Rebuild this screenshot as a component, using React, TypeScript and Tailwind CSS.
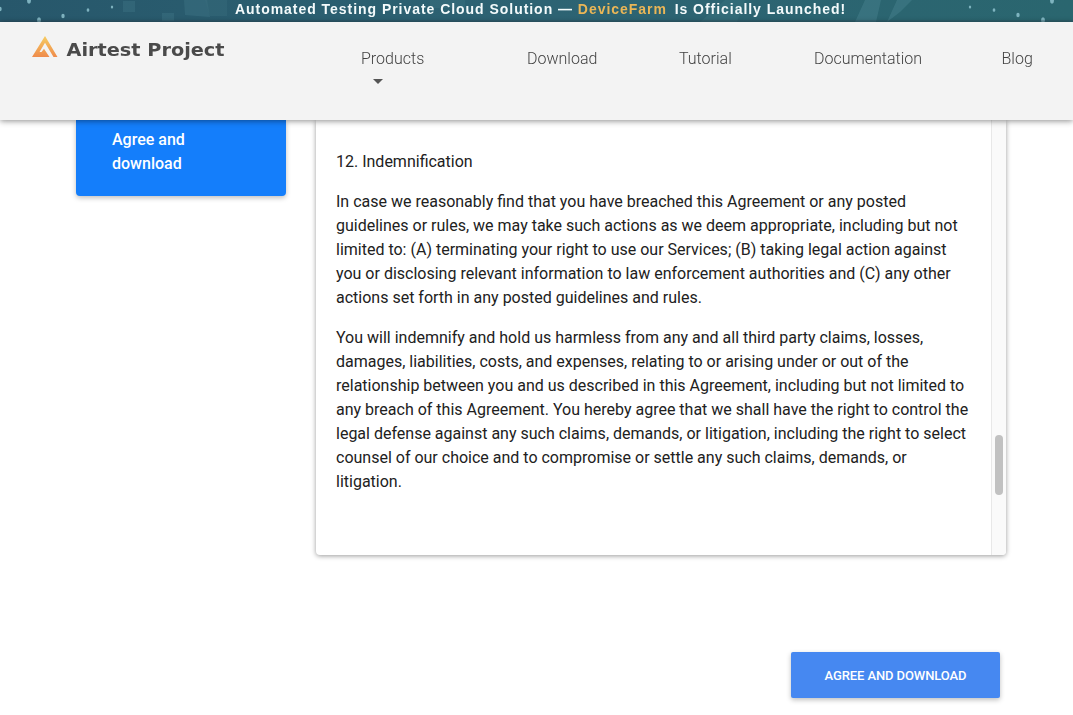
const navItems = [
  { label: "Products", width: "w-[166px]", menu: true },
  { label: "Download", width: "w-[152px]" },
  { label: "Tutorial", width: "w-[135px]" },
  { label: "Documentation", width: "w-[187.5px]" },
  { label: "Blog", width: "w-[71px]" },
];

const paragraphs = [
  "12. Indemnification",
  "In case we reasonably find that you have breached this Agreement or any posted guidelines or rules, we may take such actions as we deem appropriate, including but not limited to: (A) terminating your right to use our Services; (B) taking legal action against you or disclosing relevant information to law enforcement authorities and (C) any other actions set forth in any posted guidelines and rules.",
  "You will indemnify and hold us harmless from any and all third party claims, losses, damages, liabilities, costs, and expenses, relating to or arising under or out of the relationship between you and us described in this Agreement, including but not limited to any breach of this Agreement. You hereby agree that we shall have the right to control the legal defense against any such claims, demands, or litigation, including the right to select counsel of our choice and to compromise or settle any such claims, demands, or litigation.",
];

const dots = [
  [0, 9, 2], [29, 1, 2.3], [39, 20, 2.3], [63, 16, 2], [88, 10, 1.6], [112, 7, 1.4],
  [970, 7, 1.4], [994, 10, 1.6], [1018, 15, 2], [1043, 20, 2.3], [1052, 1, 2.3],
];

function Banner() {
  return (
    <div className="relative h-[22px] overflow-hidden bg-linear-to-r from-[#27576b] via-[#2d6373] to-[#2a666f]">
      <svg className="absolute inset-0" width="1073" height="22">
        <g fill="#6aa5b0" opacity="0.22">
          <path d="M123 1h12v11h-12zM162 13h12v8h-12zM184 0h23l3 17-25-2z" opacity="0.7" />
          <path d="M855 22l10-22h16l-5 22zM887 22l10-22h15l-12 12z" />
          <path d="M205 0h22v16h-17zM700 22l25-22h20l-8 22zM430 0h35v8h-35z" opacity="0.5" />
        </g>
        {dots.map(([x, y, r]) => (
          <ellipse key={x} cx={x} cy={y} rx={r * 0.85} ry={r * 1.15} fill="#8dc2ce" opacity="0.85" />
        ))}
        <rect y="20" width="1073" height="2" fill="#34515f" opacity="0.3" />
      </svg>
      <p className="relative pl-[235px] font-['Liberation_Sans'] text-[14px] leading-[18px] font-bold tracking-[0.96px] whitespace-nowrap text-[#f3fafb]">
        Automated Testing Private Cloud Solution — <span className="mr-[3px] text-[#eab657]">DeviceFarm</span> Is Officially Launched!
      </p>
    </div>
  );
}

function Logo() {
  return (
    <svg width="200" height="36" viewBox="0 0 200 36" aria-label="Airtest Project">
      <defs>
        <linearGradient id="flame" x1="0" y1="0" x2="0" y2="1">
          <stop offset="0" stopColor="#f6cd62" />
          <stop offset="1" stopColor="#ef8b4b" />
        </linearGradient>
      </defs>
      <path
        d="M13 5L25.5 26h-4L13 11.7 7.5 21h2L12 17.8 17.5 26H0z"
        fill="url(#flame)"
      />
      <text x="34.5" y="25.3" textLength="158" lengthAdjust="spacingAndGlyphs" fill="#4a4a4a" className="font-['DejaVu_Sans'] text-[17px] font-bold">
        Airtest Project
      </text>
    </svg>
  );
}

function Header() {
  return (
    <header className="relative z-10 flex h-[98px] bg-[#f3f3f3] shadow-[0_1px_6px_rgba(0,0,0,0.45)]">
      <div className="w-[361px] shrink-0 pt-[9px] pl-8">
        <Logo />
      </div>
      <nav className="flex pt-[25px]">
        {navItems.map((item) => (
          <a key={item.label} className={`${item.width} text-base font-light text-[#424242]`}>
            {item.label}
            {item.menu && (
              <svg className="mt-2 ml-3" width="10" height="5" viewBox="0 0 10 5">
                <path d="M0 0h10L5 5z" fill="#555" />
              </svg>
            )}
          </a>
        ))}
      </nav>
    </header>
  );
}

export default function App() {
  return (
    <div className="h-[715px] w-[1073px] overflow-hidden bg-white font-[Roboto,sans-serif] text-base text-[#212121]">
      <Banner />
      <Header />
      <main>
        <div className="flex items-start gap-[30px] pl-[76px]">
          <aside className="h-[76px] w-[210px] rounded-b bg-[#147efb] pt-2 pr-16 pl-9 font-medium text-white shadow-[0_2px_5px_rgba(0,0,0,0.25)]">
            Agree and download
          </aside>
          <section className="flex h-[435px] w-[690px] rounded-b bg-white shadow-[0_1px_5px_rgba(0,0,0,0.4)]">
            <div className="flex w-[675px] flex-col gap-4 pt-[30px] pr-5 pl-5">
              {paragraphs.map((text) => (
                <p key={text}>{text}</p>
              ))}
            </div>
            {/* Scrollbar */}
            <div className="w-[15px] rounded-br border-l border-[#e8e8e8] bg-[#fafafa] pt-[315px] pl-[3px]">
              <div className="h-[60px] w-2 rounded-full bg-[#c1c1c1]" />
            </div>
          </section>
        </div>
        <button className="mt-[97px] ml-[791px] block h-[46px] w-[209px] rounded-xs bg-[#4688f1] pt-0.5 text-[13px] font-medium tracking-[-0.1px] text-white shadow-[0_2px_5px_rgba(0,0,0,0.25)]">
          AGREE AND DOWNLOAD
        </button>
      </main>
    </div>
  );
}
